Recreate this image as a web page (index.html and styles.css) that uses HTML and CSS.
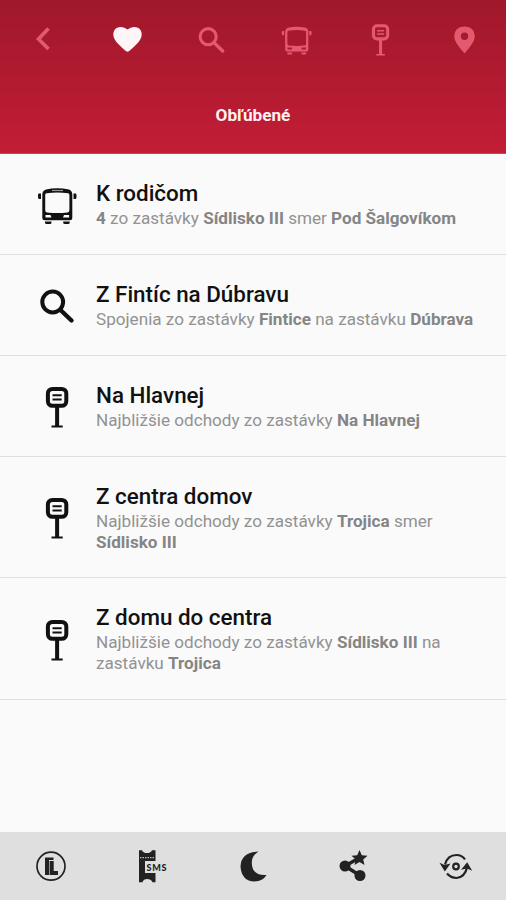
FILE: index.html
```html
<!DOCTYPE html>
<html lang="sk">
	<head>
		<meta charset="utf-8">
		<meta name="viewport" content="width=device-width, initial-scale=1">
		<title>Obľúbené</title>
		<link rel="stylesheet" href="styles.css">
	</head>
	<body>
		<!-- shared icons -->
		<svg class="defs">
			<symbol id="bus" viewBox="0 0 40 44">
				<path fill-rule="evenodd" d="M9 7.5Q20 5 32 7.5Q35 8.500 35.300 12V36Q35.300 38.300 33 38.300H7.600Q5.300 38.300 5.300 36V12Q5.600 8.500 9 7.500ZM9.500 11.200Q8.200 11.500 8.200 13V28Q8.200 30.200 10 30.400Q20.300 31.600 30.600 30.400Q32.400 30.200 32.400 28V13Q32.400 11.500 31 11.200Q20.300 9.800 9.500 11.200ZM8.500 33V35.500H14.500L13.500 33ZM32.100 33V35.500H26L27 33Z"/>
				<path d="M1.500 11.500H4V17H2Q1 17 1 15V13ZM39 11.500H36.500V17H38.500Q39.500 17 39.500 15V13Z"/>
				<path d="M8 39.500H14.500V40.500Q14.500 42 13 42H9.500Q8 42 8 40.500ZM26.200 39.500H32.700V40.500Q32.700 42 31.200 42H27.700Q26.200 42 26.200 40.500Z"/>
				<path class="busSign" d="M15 8.500H26"/>
			</symbol>
			<symbol id="search" viewBox="0 0 40 44">
				<circle class="line" cx="15.700" cy="19" r="10.400"/>
				<path class="line round" d="M23.500 27L34.500 37.500"/>
			</symbol>
			<symbol id="stop" viewBox="0 0 40 44">
				<rect class="line" x="10.900" y="4.900" width="18.400" height="16.900" rx="4.500"/>
				<path class="line" d="M20.100 22V42"/>
				<path class="thin" d="M15.500 11.300H24.700M15.500 15.600H24.700M14.500 42.500H25.700"/>
			</symbol>
		</svg>

		<div class="header">
			<div class="nav">
				<a><svg class="icon" viewBox="0 0 31 34"><path class="back" d="M20.500 6.500L10.500 17L20.500 27"/></svg></a>
				<a class="active"><svg class="icon" viewBox="0 0 31 34"><path d="M15.500 29.800Q13.500 29.500 6.500 22.300Q1.300 17.300 1.300 12.300Q1.300 8.300 4.500 6Q10.500 3.200 15.500 7.500Q20.500 3.200 26.500 6Q29.700 8.300 29.700 12.300Q29.700 17.300 24.500 22.300Q17.500 29.500 15.500 29.800Z"/></svg></a>
				<a><svg class="icon"><use href="#search"/></svg></a>
				<a><svg class="icon"><use href="#bus"/></svg></a>
				<a><svg class="icon"><use href="#stop"/></svg></a>
				<a><svg class="icon" viewBox="0 0 31 34"><path fill-rule="evenodd" d="M15.500 4.500Q25.800 5 25.800 14.500Q25.800 20 15.500 31.500Q5.200 20 5.200 14.500Q5.200 5 15.500 4.500ZM15.500 10.500A3.700 3.700 0 1 0 15.500 17.900A3.700 3.700 0 1 0 15.500 10.500Z"/></svg></a>
			</div>
			<h1>Obľúbené</h1>
		</div>

		<div class="list">
			<div class="row">
				<svg class="rowIcon"><use href="#bus"/></svg>
				<div class="text">
					<h2>K rodičom</h2>
					<p><b>4</b> zo zastávky <b>Sídlisko III</b> smer <b>Pod Šalgovíkom</b></p>
				</div>
			</div>
			<div class="row">
				<svg class="rowIcon"><use href="#search"/></svg>
				<div class="text">
					<h2>Z Fintíc na Dúbravu</h2>
					<p>Spojenia zo zastávky <b>Fintice</b> na zastávku <b>Dúbrava</b></p>
				</div>
			</div>
			<div class="row">
				<svg class="rowIcon"><use href="#stop"/></svg>
				<div class="text">
					<h2>Na Hlavnej</h2>
					<p>Najbližšie odchody zo zastávky <b>Na Hlavnej</b></p>
				</div>
			</div>
			<div class="row">
				<svg class="rowIcon"><use href="#stop"/></svg>
				<div class="text">
					<h2>Z centra domov</h2>
					<p>Najbližšie odchody zo zastávky <b>Trojica</b> smer <b>Sídlisko III</b></p>
				</div>
			</div>
			<div class="row">
				<svg class="rowIcon"><use href="#stop"/></svg>
				<div class="text">
					<h2>Z domu do centra</h2>
					<p>Najbližšie odchody zo zastávky <b>Sídlisko III</b> na zastávku <b>Trojica</b></p>
				</div>
			</div>
		</div>

		<div class="footer">
			<a><svg viewBox="0 0 40 40"><circle class="ring" cx="20" cy="20.200" r="14"/><path d="M14 11.500H22.500V14H18V29H14Z"/><path d="M18.600 15H22.700V25H27V29H18.600Z"/></svg></a>
			<a><svg viewBox="0 0 40 40"><path d="M7 4.200H10Q11 7 15 7Q19 7 20 4.200H23.500V15H13V27H23.500V36.200H20.500Q19 33 15 33Q11.500 33 10.500 36.200H7Z"/><path class="perf" d="M8 11.700H23"/><text class="sms" x="14.500" y="24.700" textLength="20">SMS</text></svg></a>
			<a><svg viewBox="0 0 40 40"><path d="M25.500 5.500Q8 6 7.500 20.500Q8.500 35 21.500 35.500Q30 35 33.500 29Q18.500 30 18.800 16Q19 9.500 25.500 5.500Z"/></svg></a>
			<a><svg viewBox="0 0 40 40"><path class="link" d="M25 12L11 20L26 29.500"/><circle cx="11" cy="20" r="5.500"/><circle cx="26" cy="29.500" r="5.500"/><path d="M25.500 4L27.800 9.200L33.500 9.700L29.200 13.500L30.500 19L25.500 16L20.500 19L21.800 13.500L17.500 9.700L23.200 9.200Z"/></svg></a>
			<a><svg viewBox="0 0 40 40"><path class="arc" d="M10 18.500Q12.500 9 21.500 9Q27 9 30 13.500M12 27.500Q16 32 21.500 32Q30 31 32 21.500"/><circle class="arc" cx="21" cy="20.500" r="2.800"/><path d="M4.500 16.800L9.500 19L15.500 17.500L9.800 25.500ZM26 23.800L32.200 16.300L37.200 24.800L32 22.500Z"/></svg></a>
		</div>
	</body>
</html>
```
FILE: styles.css
```css
body{
	margin:0;
	height:100vh;
	display:flex;
	flex-direction:column;
	background-color:#fafafa;
	font-family:Roboto, sans-serif;
}
.defs{
	display:none;
}
svg{
	display:block;
	fill:currentColor;
}
.header{
	box-sizing:border-box;
	height:154px;
	color:#e35a70;
	background:linear-gradient(#a0182b, #c21d36);
	border-bottom:1px solid #cf4459;
}
.nav{
	--sign:transparent;
	display:grid;
	grid-template-columns:repeat(6, 1fr);
	height:77px;
	margin-right:-1px;
	padding-left:1px;
}
.nav a{
	display:flex;
	justify-content:center;
	align-items:center;
}
.nav .active{
	color:#fff5f6;
}
.icon{
	width:31px;
	height:34px;
}
.back{
	fill:none;
	stroke:currentColor;
	stroke-width:3.6;
}
h1{
	margin:27px 0 0;
	color:#fff0f1;
	font-size:17.2px;
	line-height:23px;
	text-align:center;
}
.line{
	fill:none;
	stroke:currentColor;
	stroke-width:4;
}
.round{
	stroke-width:4.4;
	stroke-linecap:round;
}
.thin{
	fill:none;
	stroke:currentColor;
	stroke-width:2;
}
.busSign{
	stroke:var(--sign, #999);
	stroke-width:1.2;
}
.list{
	flex:1;
}
.row{
	box-sizing:border-box;
	display:flex;
	align-items:center;
	min-height:101px;
	padding:0 25px 0 37px;
	color:#111;
	border-bottom:1px solid #dedede;
}
.rowIcon{
	flex:none;
	width:40px;
	height:44px;
}
.text{
	margin-left:19px;
	padding:24.8px 0 24.6px;
}
h2{
	margin:0;
	font-size:22.4px;
	font-weight:500;
	line-height:28px;
}
p{
	margin:1px 0 0;
	color:#929292;
	font-size:17.13px;
	line-height:21px;
}
p b{
	color:#858585;
}
.footer{
	display:grid;
	grid-template-columns:repeat(5, 1fr);
	height:68px;
	background-color:#dfdfdf;
	color:#222;
}
.footer a{
	display:flex;
	justify-content:center;
	align-items:center;
}
.footer svg{
	width:40px;
	height:40px;
}
.ring{
	fill:none;
	stroke:currentColor;
	stroke-width:1.7;
}
.perf{
	stroke:#dfdfdf;
	stroke-width:1;
	stroke-dasharray:1.5 1;
}
.sms{
	font:900 9px Lato, sans-serif;
}
.link{
	fill:none;
	stroke:currentColor;
	stroke-width:3.5;
}
.arc{
	fill:none;
	stroke:currentColor;
	stroke-width:2.2;
}
```
